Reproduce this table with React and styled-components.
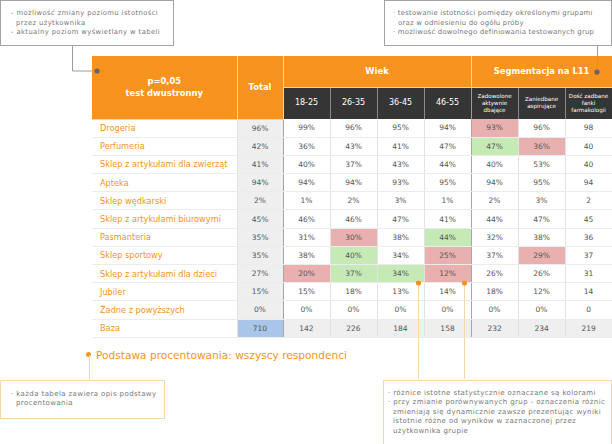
import React from 'react';
import styled, { createGlobalStyle } from 'styled-components';

const ORANGE = '#f7931e';
const LABEL = '#f7941d';
const WARM_LINE = '#fcd5aa';

const GlobalStyle = createGlobalStyle`
  html, body {
    margin: 0;
    padding: 0;
    background: #fff;
  }
  body {
    font-family: "DejaVu Sans", "Liberation Sans", sans-serif;
  }
`;

const Page = styled.div`
  position: relative;
  width: 612px;
  height: 444px;
  overflow: hidden;
  display: flex;
  flex-direction: column;
`;

const NoteRow = styled.div`
  display: flex;
  justify-content: space-between;
  align-items: flex-start;
  margin-top: ${p => p.$gap || 0}px;
`;

const Note = styled.div`
  width: ${p => p.$width}px;
  height: ${p => p.$height}px;
  box-sizing: border-box;
  background: #fff;
  border: 1px solid ${p => (p.$warm ? WARM_LINE : '#a3a3a3')};
  padding: ${p => p.$pad};
  color: #777;
  font-size: ${p => p.$size || 7}px;
  line-height: 9.5px;
  letter-spacing: ${p => p.$track ?? 0.4}px;
`;

const NoteItem = styled.div`
  padding-left: 5px;
  text-indent: -5px;
  white-space: nowrap;
`;

const TableArea = styled.div`
  margin: 10px 0 0 92px;
`;

const Table = styled.table`
  border-collapse: collapse;
  table-layout: fixed;
  width: 520px;
`;

const HeadRow = styled.tr`
  height: ${p => p.$h}px;
`;

const HeadCell = styled.th`
  background: ${ORANGE};
  color: #fff;
  font-weight: bold;
  font-size: 8.4px;
  line-height: 12px;
  padding: 0;
  text-align: center;
  border-right: 1px solid #fcd3a4;
  border-bottom: 1px solid #fcd3a4;
`;

const SubCell = styled.th`
  background: #353535;
  color: #fff;
  font-weight: normal;
  font-size: ${p => (p.$small ? '5.6px' : '8px')};
  line-height: ${p => (p.$small ? '7px' : '10px')};
  padding: 0 1px;
  text-align: center;
  border-right: 1px solid ${p => (p.$sep ? '#9a9a9a' : '#8a8a8a')};
`;

const BodyRow = styled.tr`
  height: 18.2px;
`;

const Label = styled.td`
  color: ${LABEL};
  font-size: 8.2px;
  padding: 0 0 0 8px;
  white-space: nowrap;
  background: #fff;
  border-bottom: 1px solid #ececec;
  border-right: 1px solid #e4e4e4;
`;

const tones = {
  red: '#e9b0b0',
  green: '#c6eab6',
  blue: '#a9c6e8',
  gray: '#efefef',
};

const Cell = styled.td`
  color: #555;
  font-size: 7.5px;
  padding: 0;
  text-align: center;
  background: ${p => tones[p.$tone] || '#fff'};
  border-bottom: 1px solid #ececec;
  border-right: 1px solid ${p => (p.$sep ? '#a6a6a6' : '#e2e2e2')};
`;

const Caption = styled.div`
  display: flex;
  align-items: center;
  gap: 5px;
  margin: 11px 0 0 86px;
  color: ${LABEL};
  font-size: 10.6px;
  line-height: 12px;
`;

const CaptionDot = styled.span`
  width: 5px;
  height: 5px;
  border-radius: 50%;
  background: ${LABEL};
  flex: none;
`;

const Connectors = styled.svg`
  position: absolute;
  left: 0;
  top: 0;
  pointer-events: none;
`;

const ages = ['18-25', '26-35', '36-45', '46-55'];
const segments = [
  ['Zadowolone', 'aktywnie', 'dbające'],
  ['Zaniedbane', 'aspirujące'],
  ['Dość zadbane', 'fanki', 'farmakologii'],
];

// values: total, 4 age groups, 3 segments; tones keyed by column index
const rows = [
  { name: 'Drogeria', v: ['96%', '99%', '96%', '95%', '94%', '93%', '96%', '98'], t: { 5: 'red' } },
  { name: 'Perfumeria', v: ['42%', '36%', '43%', '41%', '47%', '47%', '36%', '40'], t: { 5: 'green', 6: 'red' } },
  { name: 'Sklep z artykułami dla zwierząt', v: ['41%', '40%', '37%', '43%', '44%', '40%', '53%', '40'], t: {} },
  { name: 'Apteka', v: ['94%', '94%', '94%', '93%', '95%', '94%', '95%', '94'], t: {} },
  { name: 'Sklep wędkarski', v: ['2%', '1%', '2%', '3%', '1%', '2%', '3%', '2'], t: {} },
  { name: 'Sklep z artykułami biurowymi', v: ['45%', '46%', '46%', '47%', '41%', '44%', '47%', '45'], t: {} },
  { name: 'Pasmanteria', v: ['35%', '31%', '30%', '38%', '44%', '32%', '38%', '36'], t: { 2: 'red', 4: 'green' } },
  { name: 'Sklep sportowy', v: ['35%', '38%', '40%', '34%', '25%', '37%', '29%', '37'], t: { 2: 'green', 4: 'red', 6: 'red' } },
  { name: 'Sklep z artykułami dla dzieci', v: ['27%', '20%', '37%', '34%', '12%', '26%', '26%', '31'], t: { 1: 'red', 2: 'green', 3: 'green', 4: 'red' } },
  { name: 'Jubiler', v: ['15%', '15%', '18%', '13%', '14%', '18%', '12%', '14'], t: {} },
  { name: 'Żadne z powyższych', v: ['0%', '0%', '0%', '0%', '0%', '0%', '0%', '0'], t: {} },
];

const base = ['710', '142', '226', '184', '158', '232', '234', '219'];

function Lines({ items }) {
  return items.map(lines => (
    <NoteItem key={lines[0]}>
      {lines.map((l, i) => (
        <React.Fragment key={l}>
          {i > 0 && <br />}
          {l}
        </React.Fragment>
      ))}
    </NoteItem>
  ));
}

function App() {
  return (
    <Page>
      <GlobalStyle />
      <NoteRow>
        <Note $width={174} $height={46} $pad="8px 10px" $size={6.8}>
          <Lines
            items={[
              ['- możliwość zmiany poziomu istotności', 'przez użytkownika'],
              ['- aktualny poziom wyświetlany w tabeli'],
            ]}
          />
        </Note>
        <Note $width={228} $height={46} $pad="8px 8px" $size={6.9} $track={0.22}>
          <Lines
            items={[
              ['· testowanie istotności pomiędzy określonymi grupami', 'oraz w odniesieniu do ogółu próby'],
              ['· możliwość dowolnego definiowania testowanych grup'],
            ]}
          />
        </Note>
      </NoteRow>

      <TableArea>
        <Table>
          <colgroup>
            <col style={{ width: 145 }} />
            <col style={{ width: 46 }} />
            {[0, 1, 2, 3, 4, 5, 6].map(i => (
              <col key={i} style={{ width: 47 }} />
            ))}
          </colgroup>
          <thead>
            <HeadRow $h={31}>
              <HeadCell rowSpan={2}>
                p=0,05
                <br />
                test dwustronny
              </HeadCell>
              <HeadCell rowSpan={2}>Total</HeadCell>
              <HeadCell colSpan={4}>Wiek</HeadCell>
              <HeadCell colSpan={3}>Segmentacja na L11</HeadCell>
            </HeadRow>
            <HeadRow $h={32}>
              {ages.map((a, i) => (
                <SubCell key={a} $sep={i === 3}>{a}</SubCell>
              ))}
              {segments.map(s => (
                <SubCell key={s[0]} $small>
                  {s.map((w, i) => (
                    <React.Fragment key={w}>
                      {i > 0 && <br />}
                      {w}
                    </React.Fragment>
                  ))}
                </SubCell>
              ))}
            </HeadRow>
          </thead>
          <tbody>
            {rows.map(r => (
              <BodyRow key={r.name}>
                <Label>{r.name}</Label>
                {r.v.map((val, i) => (
                  <Cell key={i} $tone={r.t[i] || (i === 0 ? 'gray' : null)} $sep={i === 0 || i === 4}>
                    {val}
                  </Cell>
                ))}
              </BodyRow>
            ))}
            <BodyRow>
              <Label>Baza</Label>
              {base.map((val, i) => (
                <Cell key={i} $tone={i === 0 ? 'blue' : 'gray'} $sep={i === 0 || i === 4}>
                  {val}
                </Cell>
              ))}
            </BodyRow>
          </tbody>
        </Table>
      </TableArea>

      <Caption>
        <CaptionDot />
        Podstawa procentowania: wszyscy respondenci
      </Caption>

      <NoteRow $gap={19}>
        <Note $width={165} $height={39} $pad="9px 10px" $warm>
          <Lines items={[['· każda tabela zawiera opis podstawy', 'procentowania']]} />
        </Note>
        <Note $width={229} $height={66} $pad="8px 4px" $warm>
          <Lines
            items={[
              ['· różnice istotne statystycznie oznaczane są kolorami'],
              [
                '· przy zmianie porównywanych grup - oznaczenia różnic',
                'zmieniają się dynamicznie zawsze prezentując wyniki',
                'istotnie różne od wyników w zaznaczonej przez',
                'użytkownika grupie',
              ],
            ]}
          />
        </Note>
      </NoteRow>

      <Connectors width="612" height="444" viewBox="0 0 612 444">
        <polyline points="72.5,46 72.5,71 97,71" fill="none" stroke="#9d9d9d" strokeWidth="1" />
        <circle cx="97" cy="71" r="2.6" fill="#666" />
        <line x1="597.5" y1="46" x2="597.5" y2="72" stroke="#9d9d9d" strokeWidth="1" />
        <circle cx="597" cy="72" r="2.6" fill="#666" />
        <line x1="89.5" y1="355" x2="89.5" y2="379" stroke={WARM_LINE} strokeWidth="1" />
        <line x1="418.5" y1="283" x2="418.5" y2="379" stroke={WARM_LINE} strokeWidth="1" />
        <line x1="464.5" y1="283" x2="464.5" y2="379" stroke={WARM_LINE} strokeWidth="1" />
        <circle cx="418.5" cy="283" r="2.6" fill={ORANGE} />
        <circle cx="464.5" cy="283" r="2.6" fill={ORANGE} />
      </Connectors>
    </Page>
  );
}

export default App;
